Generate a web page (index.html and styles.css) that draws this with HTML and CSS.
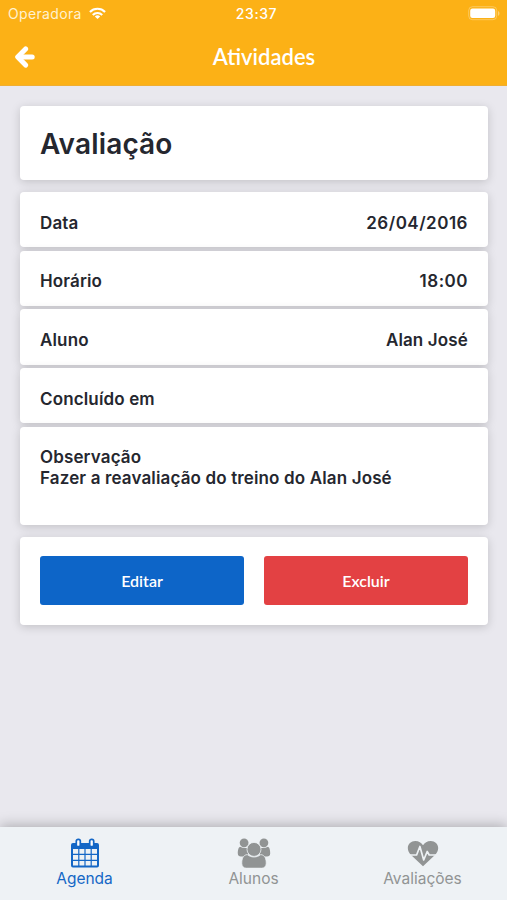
FILE: index.html
```html
<!DOCTYPE html>
<html lang="pt-BR">
<head>
    <meta charset="UTF-8">
    <meta name="viewport" content="width=device-width, initial-scale=1.0">
    <title>Atividades</title>
    <link rel="stylesheet" href="styles.css">
</head>
<body>
    <header>
        <div class="status-bar">
            <div class="carrier">
                <span>Operadora</span>
                <svg class="wifi" viewBox="0 0 18 13" fill="none" stroke="#fff" stroke-width="2.3">
                    <path d="M1 4.8a11.3 11.3 0 0 1 16 0M4 8a7.1 7.1 0 0 1 10 0"/>
                    <path d="M9 12.3L6.2 9.6a4 4 0 0 1 5.6 0z" fill="#fff" stroke="none"/>
                </svg>
            </div>
            <span class="clock">23:37</span>
            <svg class="battery" viewBox="0 0 32 15">
                <rect x="0.7" y="0.7" width="28" height="13" rx="3.8" fill="none" stroke="#fff" stroke-opacity="0.3"/>
                <rect x="2.2" y="2.5" width="25" height="9.4" rx="2.2" fill="#fff"/>
                <path d="M30 5c2 .8 2 4 0 4.8z" fill="#fff" fill-opacity="0.4"/>
            </svg>
        </div>
        <div class="nav-bar">
            <svg class="back" viewBox="0 0 21 22" fill="none" stroke="#fff" stroke-width="5">
                <path d="M11.6 2.9L3.7 11l7.9 8.1" stroke-linecap="round" stroke-linejoin="round"/>
                <path d="M5 11h13.2" stroke-linecap="round"/>
            </svg>
            <h1>Atividades</h1>
        </div>
    </header>

    <main>
        <section class="card card-title">
            <h2>Avaliação</h2>
        </section>

        <section class="details">
            <div class="card row"><span>Data</span><span class="number">26/04/2016</span></div>
            <div class="card row"><span>Horário</span><span class="number">18:00</span></div>
            <div class="card row"><span>Aluno</span><span>Alan José</span></div>
            <div class="card row"><span>Concluído em</span></div>
            <div class="card note">
                <p>Observação</p>
                <p>Fazer a reavaliação do treino do Alan José</p>
            </div>
        </section>

        <section class="card actions">
            <button class="btn btn-edit">Editar</button>
            <button class="btn btn-delete">Excluir</button>
        </section>
    </main>

    <footer>
        <a class="tab active">
            <svg viewBox="0 0 34 30">
                <path fill="currentColor" fill-rule="evenodd" d="M5 5h24a2 2 0 0 1 2 2v20.5a2 2 0 0 1-2 2H5a2 2 0 0 1-2-2V7a2 2 0 0 1 2-2zM5 11v4.8h5.2V11zm6.4 0v4.8h5V11zm6.2 0v4.8h5V11zm6.2 0v4.8H29V11zM5 17v4.8h5.2V17zm6.4 0v4.8h5V17zm6.2 0v4.8h5V17zm6.2 0v4.8H29V17zM5 23v4.5h5.2V23zm6.4 0v4.5h5V23zm6.2 0v4.5h5V23zm6.2 0v4.5H29V23z"/>
                <g fill="#fff" stroke="currentColor" stroke-width="1.7">
                    <rect x="8.3" y="1.3" width="4" height="7.4" rx="1.8"/>
                    <rect x="21.7" y="1.3" width="4" height="7.4" rx="1.8"/>
                </g>
            </svg>
            <span>Agenda</span>
        </a>
        <a class="tab">
            <svg viewBox="0 0 34 30" fill="currentColor">
                <circle cx="7.1" cy="4.8" r="4.4"/>
                <circle cx="26.9" cy="4.8" r="4.4"/>
                <path d="M3 8.8c2.8 1.5 6 1.5 8.7.6L11 18.5H4c-2 0-3.2-1-3.2-3 0-2.5.4-5.9 2.2-6.700zM31 8.8c-2.8 1.5-6 1.5-8.700.6L23 18.500h7c2 0 3.200-1 3.200-3 0-2.500-.4-5.900-2.200-6.700z"/>
                <g stroke="#eef2f5" stroke-width="0.8">
                    <path d="M10.2 16.6c4 3.200 9.600 3.200 13.600 0 4 .2 5.600 4.500 5.400 9 0 2.900-1.800 4.600-4.600 4.600H9.400c-2.800 0-4.600-1.700-4.600-4.600-.2-4.500 1.400-8.800 5.400-9z"/>
                    <circle cx="17" cy="11.4" r="7"/>
                </g>
            </svg>
            <span>Alunos</span>
        </a>
        <a class="tab">
            <svg class="heart" viewBox="0 0 34 30">
                <path fill="currentColor" d="M17 28.3L5 17C-1.500 9.800 3 3 9.200 3 13 3 15.200 5 17 7.200 18.800 5 21 3 24.800 3 31 3 35.500 9.800 29 17z"/>
                <path fill="none" stroke="#eef2f5" stroke-width="1.7" stroke-linejoin="round" d="M3 17h7.600l3.300-8.500 3.800 13.500 3.500-8.500 2 3.500H31"/>
            </svg>
            <span>Avaliações</span>
        </a>
    </footer>
</body>
</html>
```
FILE: styles.css
```css
* {
    box-sizing: border-box;
}

body {
    font-family: Inter, sans-serif;
    margin: 0;
    height: 100vh;
    display: flex;
    flex-direction: column;
    background-color: #e9e8ee;
    color: #25272f;
    overflow: hidden;
}

header {
    height: 86px;
    background-color: #fcb116;
    border-bottom: 1px solid #efae32;
    color: white;
}

.status-bar {
    height: 27px;
    padding: 0 7px 0 8px;
    display: grid;
    grid-template-columns: 1fr auto 1fr;
    align-items: center;
    font-size: 14px;
}

.carrier {
    display: flex;
    align-items: center;
    gap: 7px;
    letter-spacing: 0.35px;
    color: #fff1d0;
}

.wifi {
    width: 17px;
    height: 13px;
}

.clock {
    padding-left: 5px;
    font-weight: 500;
    letter-spacing: 0.6px;
}

.battery {
    width: 32px;
    height: 15px;
    justify-self: end;
}

.nav-bar {
    height: 58px;
    padding: 0 14px;
    display: grid;
    grid-template-columns: 1fr auto 1fr;
    align-items: center;
}

.back {
    width: 21px;
    height: 22px;
    margin-top: 2px;
}

h1 {
    margin: 0;
    padding-left: 21px;
    font-family: Lato, sans-serif;
    font-size: 22px;
    font-weight: 600;
}

main {
    flex: 1;
    padding: 20px 19px 0 20px;
    display: flex;
    flex-direction: column;
    gap: 12px;
}

.card {
    background: white;
    border-radius: 4px;
    box-shadow: 0 2px 10px rgba(0, 0, 0, 0.17);
}

.card-title {
    height: 74px;
    padding: 2px 20px 0;
    display: flex;
    align-items: center;
}

h2 {
    margin: 0;
    font-size: 28px;
    font-weight: 600;
    letter-spacing: 0.15px;
}

.details {
    display: flex;
    flex-direction: column;
    gap: 3.4px;
    font-size: 17px;
    font-weight: 600;
    letter-spacing: 0.14px;
}

.row {
    height: 55.3px;
    padding: 6px 20px 0;
    display: flex;
    align-items: center;
    justify-content: space-between;
}

.number {
    letter-spacing: 0.5px;
}

.note {
    height: 98px;
    padding: 20px 20px;
    line-height: 21px;
}

.note p {
    margin: 0;
}

.actions {
    height: 88px;
    padding: 19.5px 20px;
    display: flex;
    gap: 20px;
}

.btn {
    flex: 1;
    border: none;
    border-radius: 3px;
    color: white;
    font-family: Lato, sans-serif;
    font-size: 16px;
    font-weight: 600;
    cursor: pointer;
}

.btn-edit {
    background-color: #0d65c8;
}

.btn-delete {
    background-color: #e34143;
}

footer {
    height: 73px;
    display: flex;
    background-color: #eef2f5;
    box-shadow: 0 -2px 12px rgba(0, 0, 0, 0.25);
}

.tab {
    flex: 1;
    padding-top: 11px;
    display: flex;
    flex-direction: column;
    align-items: center;
    gap: 1px;
    color: #919494;
    font-size: 15.5px;
}

.tab svg {
    width: 34px;
    height: 30px;
}

.tab span {
    line-height: 20px;
}

.active {
    color: #1467c6;
}
```
